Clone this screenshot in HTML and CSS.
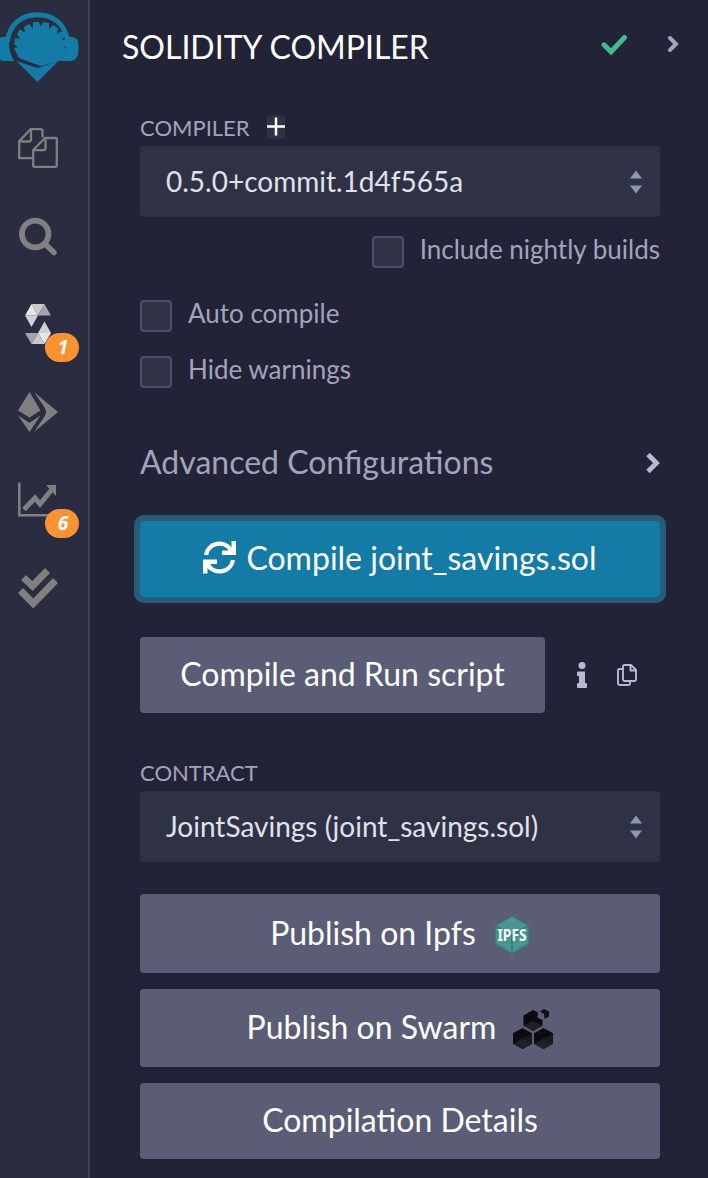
FILE: index.html
```html
<!DOCTYPE html>
<html lang="en">
<head>
<meta charset="utf-8">
<title>Solidity Compiler</title>
<link rel="stylesheet" href="styles.css">
</head>
<body>
<div class="app">
  <nav class="rail">
    <svg class="logo" width="80" height="72" viewBox="0 0 80 72">
      <path fill="none" stroke="#147aa6" stroke-width="5" d="M7.5 31C9 13 22 3.700 37.500 3.700S66 13 67.500 31"/>
      <path fill="#147aa6" d="M0 26.500 9.500 25Q7 38 14 50H3Q0 50 0 47zM66 25l8 1.500c3 1 4.500 3 4.500 8v5c0 6-3 10.500-8 10.500H61Q68 38 66 25z"/>
      <path fill="#147aa6" d="M19 47 14 37l4-1-4-3 1-6 5 1-3-5 3-5 5 4-1-6 5-3 4 5 0-7h6l0 0 2 5 2-5 6 1 0 6 4-4 5 3-1 6 5-3 3 5-3 4 5 0 1 5-4 3 4 1-1 6-4 5-22.500 6z"/>
      <path fill="#147aa6" d="M16.500 50 37.500 57l21-7-21 21z"/>
    </svg>
    <svg class="nav files" width="40" height="40" viewBox="0 0 40 40" fill="none" stroke="#808080" stroke-width="2.300" stroke-linejoin="round">
      <path d="M14.500 30.200H1.200V13.200L12.500 1.200H22q2.500 0 2.500 2V9.500M1.500 13.500h9q2.500 0 2.500-2V2"/>
      <path d="M15.200 37V22L27 10h11q.8 0 .8 1v26q0 1.800-1.500 1.800h-21q-1.100 0-1.100-1.800zM15.500 22.200h9q3 0 3-2V10.500"/>
    </svg>
    <svg class="nav find" width="40" height="40" viewBox="0 0 40 40" fill="none" stroke="#808080"><circle cx="17.200" cy="17" r="13.300" stroke-width="5.700"/><path stroke-width="5.500" stroke-linecap="round" d="m27 27 9 8.500"/></svg>
    <div class="nav with-badge">
      <svg width="40" height="40" viewBox="0 0 40 40">
        <path fill="#e5e5e8" d="M13.500 0 20 11.500H7z"/><path fill="#c9c9ce" d="M13.500 0H26.500L20 11.500z"/><path fill="#a3a4ac" d="m26.500 0 6.500 11.500H20z"/><path fill="#d0d1d5" d="M7 11.500h13L13.500 23z"/>
        <path fill="#d0d1d5" d="M26.500 17.500 33 29H20z"/><path fill="#e5e5e8" d="M33 29l-6.500 11L20 29z"/><path fill="#c9c9ce" d="m20 29 6.500 11h-13z"/><path fill="#a3a4ac" d="M7 29h13l-6.500 11z"/>
      </svg>
      <i class="badge">1</i>
    </div>
    <svg class="nav deploy" width="40" height="40" viewBox="0 0 40 40" fill="#808080"><path d="M11.500 0 22.500 18.500 11.500 25.500 0 18.500zM0 23.500l11.500 7.200 11-7.200L11.500 40zM16 0l24 20L16 40 26.500 24.500q3-4.500 0-9z"/></svg>
    <div class="nav with-badge stats">
      <svg width="40" height="40" viewBox="0 0 40 40"><path fill="none" stroke="#808080" stroke-width="2.500" d="M1.300 2.500V35.200H38"/><path fill="none" stroke="#808080" stroke-width="5" d="m6 29.500 11-11.500 5 6L33.500 10"/><path fill="#808080" d="M28 5h10v11z"/></svg>
      <i class="badge">6</i>
    </div>
    <svg class="nav checks" width="40" height="40" viewBox="0 0 40 40" fill="none" stroke="#808080" stroke-width="7"><path d="m5.500 9.500 9 8.500 15-15.500M2.500 22.500l12.800 13L37.500 12.500"/></svg>
  </nav>

  <main class="panel">
    <header class="head">
      <h1 class="title">SOLIDITY COMPILER</h1>
      <svg class="ok" width="28" height="22" viewBox="0 0 28 22" fill="none" stroke="#42bb8a" stroke-width="5" stroke-linecap="round"><path d="m4 11.800 7 7L24.500 4.500" stroke-linecap="round"/></svg>
      <svg class="more" width="12" height="18" viewBox="0 0 12 18" fill="none" stroke="#a2a3bd" stroke-width="4" stroke-linecap="round"><path d="m3 3 6 6-6 6"/></svg>
    </header>

    <div class="label"><span class="t-compiler">COMPILER</span><span class="plus"><svg width="18" height="20" viewBox="0 0 18 20"><path stroke="#fff" stroke-width="2.500" d="M0 9.500h18M9 .5v18"/></svg></span></div>
    <div class="select"><span class="t-version">0.5.0+commit.1d4f565a</span><svg width="12" height="24" viewBox="0 0 12 24" fill="#8d96b3"><path d="m6 .5 6 8H0zM0 15.500h12l-6 8z"/></svg></div>

    <div class="check right"><span class="box"></span><span class="t-nightly">Include nightly builds</span></div>
    <div class="check auto"><span class="box"></span><span class="t-auto">Auto compile</span></div>
    <div class="check hide"><span class="box"></span><span class="t-hide">Hide warnings</span></div>

    <div class="advanced"><span class="t-advanced">Advanced Configurations</span><svg width="16" height="22" viewBox="0 0 16 22" fill="none" stroke="#b9bad0" stroke-width="4.800"><path d="m3 2.500 8.500 8.500L3 19.500"/></svg></div>

    <button class="btn primary">
      <svg width="33" height="33" viewBox="0 0 33 33"><path fill="none" stroke="#fff" stroke-width="4.300" d="M3 14A13.600 13.600 0 0 1 28 9M30 19A13.600 13.600 0 0 1 5 24"/><path fill="#fff" d="M28.500 0H33V14H19V9.500H25L28.500 6zM0 18.500H14V23H8L4.500 26.500V32.500H0z"/></svg>
      <span class="t-compile">Compile joint_savings.sol</span>
    </button>

    <div class="run-row">
      <button class="btn run"><span class="t-run">Compile and Run script</span></button>
      <svg class="info" width="10" height="26" viewBox="0 0 10 26" fill="#b9bad0"><circle cx="5" cy="3.500" r="3.500"/><path d="M1 9.500h7V21h1q1 0 1 1v3q0 1-1 1H1q-1 0-1-1v-3q0-1 1-1h1v-7H1q-1 0-1-1v-2.500q0-1 1-1z"/></svg>
      <svg class="copy" width="20" height="22" viewBox="0 0 20 22" fill="none" stroke="#b9bad0" stroke-width="1.900" stroke-linejoin="round"><path d="M6 5H2.500Q1 5 1 6.500v13Q1 21 2.500 21h9q1.500 0 1.500-1.500V17M7.500 1H14l5 5v9.500q0 1.500-1.500 1.500h-10Q6 17 6 15.500v-13Q6 1 7.500 1zM13.500 1v5.500H19"/></svg>
    </div>

    <div class="label contract"><span class="t-contract">CONTRACT</span></div>
    <div class="select"><span class="t-joint">JointSavings (joint_savings.sol)</span><svg width="12" height="24" viewBox="0 0 12 24" fill="#8d96b3"><path d="m6 .5 6 8H0zM0 15.500h12l-6 8z"/></svg></div>

    <div class="publish">
      <button class="btn ipfs"><span class="t-ipfs">Publish on Ipfs</span>
        <svg width="36" height="40" viewBox="0 0 36 40"><path fill="#357f7f" d="m18 .5 17 10v19l-17 10-17-10v-19z"/><path fill="#499592" d="m18 1.800 14.500 8.700L18 19 3.500 10.500zM2.300 12.500 17 21v16L2.300 28.500zM33.700 12.500 19 21v16l14.700-8.500z"/><text class="cube-text" x="18" y="26" text-anchor="middle" textLength="29" lengthAdjust="spacingAndGlyphs">IPFS</text></svg>
      </button>
      <button class="btn swarm"><span class="t-swarm">Publish on Swarm</span>
        <svg width="40" height="40" viewBox="0 0 40 40"><g id="cube"><path fill="#0c0c0f" d="m9.500 19 9.500 5.300v10.400L9.500 40 0 34.700V24.300z"/><path fill="#18181d" d="M9.500 29.500 19 25v9.700L9.500 40z"/><path fill="#202026" d="m9.500 29.500 9.500 5.200L9.500 40 0 34.700z"/></g><use href="#cube" x="21"/>
          <path fill="#0c0c0f" d="m20 1 5 2.500-.5 5 5 2.500v5.500L20 22l-9.500-5.500v-10z"/><path fill="#202026" d="m20 12 9.500 4.500L20 22l-9.500-5.500z"/><path fill="#111115" d="m27 2.500 4-2.500 5 2.500v5l-4.500 2.500-.5-5z"/></svg>
      </button>
      <button class="btn details"><span class="t-details">Compilation Details</span></button>
    </div>
  </main>
</div>
</body>
</html>
```
FILE: styles.css
```css
* { box-sizing: border-box; }
body { margin: 0; background: #222336; font-family: Lato, "Noto Sans", sans-serif; color: #a2a3bd; }
.app { display: flex; height: 1178px; overflow: hidden; }
svg { display: block; flex: none; }
span { white-space: nowrap; }

.rail { width: 90px; flex: none; background: #2a2c3f; border-right: 2px solid #3f4254; padding-top: 11px; display: flex; flex-direction: column; }
.nav { margin-left: 18px; margin-bottom: 48px; }
.logo { margin-bottom: 45px; }
.files { margin-bottom: 49px; }
.find { margin-bottom: 47px; }
.with-badge { position: relative; width: 40px; height: 40px; }
.stats svg { margin-top: 0; }
.badge { position: absolute; left: 27px; top: 29px; width: 34px; height: 29px; border-radius: 15px; background: #fc9231; color: #fff; font: italic 700 19px/28px "Noto Sans", sans-serif; text-align: center; padding-left: 2px; }

.panel { width: 618px; padding: 0 48px 0 50px; }
.head { display: flex; align-items: center; height: 94px; margin: 0 -20px 0 -18px; }
.title { margin: 0; flex: 1; font-size: 32px; font-weight: 400; color: #fff; white-space: nowrap; line-height: 40px; }
.ok { margin: -7px 39px 0 0; }
.more { margin: -7px 1px 0 0; }

.label { display: flex; align-items: center; height: 28px; font-size: 22px; margin-top: 19px; margin-bottom: 5px; }
.plus { background: #2f3144; border-radius: 4px; margin-left: 17px; padding: 2px 0; }
.select { height: 71px; border-radius: 4px; background: #2f3144; color: #e0e1ea; font-size: 28px; display: flex; align-items: center; justify-content: space-between; padding: 0 18px 2px 26px; }
.select svg { margin-top: 2px; }

.check { display: flex; gap: 16px; font-size: 26px; line-height: 26px; height: 32px; }
.box { width: 32px; height: 32px; flex: none; border: 2px solid #4f5068; border-radius: 4px; background: #2f3144; }
.right { justify-content: flex-end; margin-top: 19px; }
.auto { margin-top: 32px; }
.hide { margin-top: 24px; }
.advanced { display: flex; align-items: center; justify-content: space-between; height: 40px; margin-top: 53px; font-size: 32px; }
.advanced svg { margin: 4px -1px 0 0; }

.btn { display: flex; align-items: center; justify-content: center; width: 100%; height: 76px; margin: 0; padding: 0 0 2px; border: 0; border-radius: 4px; background: #5b5c76; color: #fff; font: 400 32px/40px Lato, "Noto Sans", sans-serif; }
.primary { background: #147aa6; margin-top: 40px; gap: 10px; box-shadow: 0 0 0 6px #295a76; }
.primary svg { margin-top: -2px; }
.run-row { display: flex; align-items: center; margin-top: 40px; }
.run { width: 405px; }
.info { margin-left: 32px; }
.copy { margin-left: 30px; }
.contract { margin-top: 45px; }
.publish { display: grid; gap: 16px; margin-top: 32px; }
.ipfs { height: 79px; gap: 18px; }
.swarm { height: 78px; gap: 17px; }
.ipfs svg, .swarm svg { margin-top: 4px; }
.cube-text { font: 700 16px "Noto Sans", sans-serif; fill: #fff; }
```
